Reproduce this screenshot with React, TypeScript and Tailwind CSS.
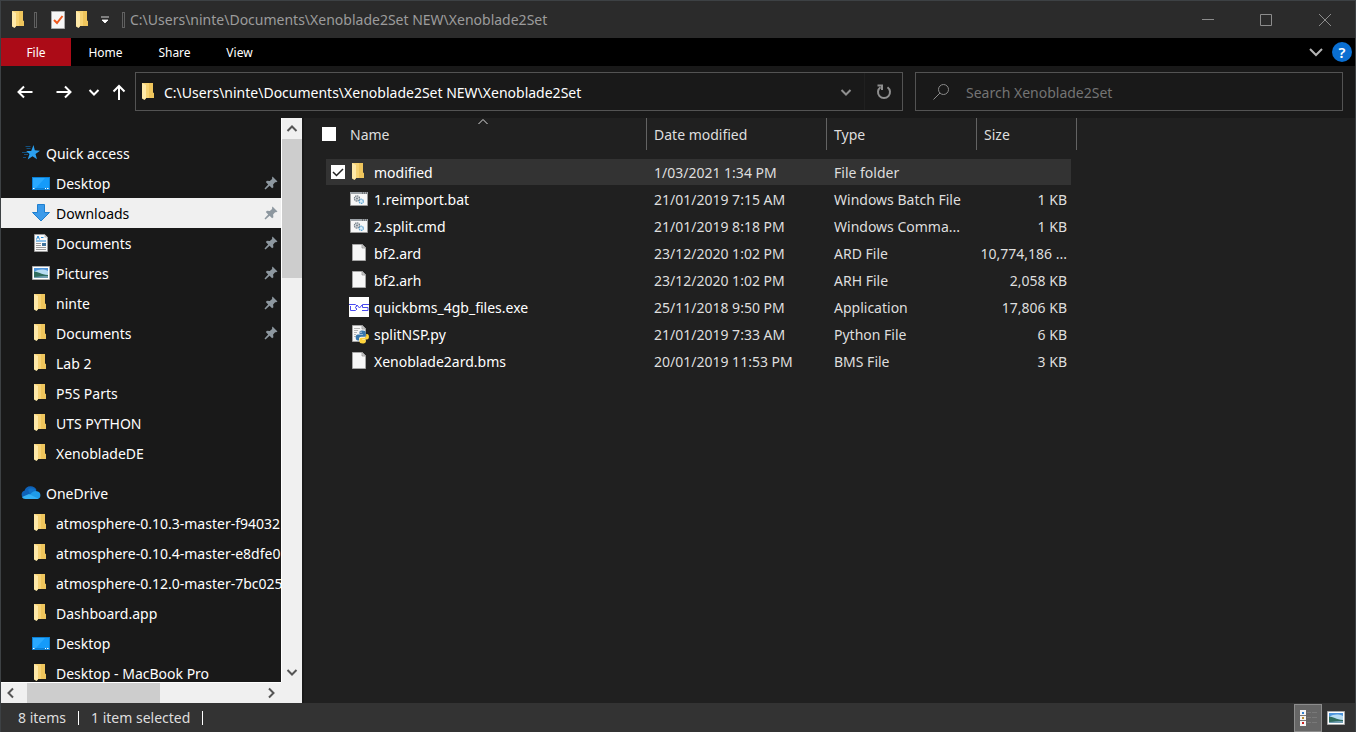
import React, { useState } from 'react'

type IconName = 'folder' | 'desktop' | 'download' | 'document' | 'picture' | 'batch' | 'file' | 'bms' | 'python' | 'star' | 'cloud'

type PlaceProps = {
  name: string
  icon: IconName
  pinned?: boolean
}

type FileProps = {
  name: string
  icon: IconName
  date: string
  type: string
  size: string
}

const quickAccess: PlaceProps[] = [
  { name: 'Desktop', icon: 'desktop', pinned: true },
  { name: 'Downloads', icon: 'download', pinned: true },
  { name: 'Documents', icon: 'document', pinned: true },
  { name: 'Pictures', icon: 'picture', pinned: true },
  { name: 'ninte', icon: 'folder', pinned: true },
  { name: 'Documents', icon: 'folder', pinned: true },
  { name: 'Lab 2', icon: 'folder' },
  { name: 'P5S Parts', icon: 'folder' },
  { name: 'UTS PYTHON', icon: 'folder' },
  { name: 'XenobladeDE', icon: 'folder' },
]

const oneDrive: PlaceProps[] = [
  { name: 'atmosphere-0.10.3-master-f94032', icon: 'folder' },
  { name: 'atmosphere-0.10.4-master-e8dfe0', icon: 'folder' },
  { name: 'atmosphere-0.12.0-master-7bc025', icon: 'folder' },
  { name: 'Dashboard.app', icon: 'folder' },
  { name: 'Desktop', icon: 'desktop' },
  { name: 'Desktop - MacBook Pro', icon: 'folder' },
]

const files: FileProps[] = [
  { name: 'modified', icon: 'folder', date: '1/03/2021 1:34 PM', type: 'File folder', size: '' },
  { name: '1.reimport.bat', icon: 'batch', date: '21/01/2019 7:15 AM', type: 'Windows Batch File', size: '1 KB' },
  { name: '2.split.cmd', icon: 'batch', date: '21/01/2019 8:18 PM', type: 'Windows Comma...', size: '1 KB' },
  { name: 'bf2.ard', icon: 'file', date: '23/12/2020 1:02 PM', type: 'ARD File', size: '10,774,186 ...' },
  { name: 'bf2.arh', icon: 'file', date: '23/12/2020 1:02 PM', type: 'ARH File', size: '2,058 KB' },
  { name: 'quickbms_4gb_files.exe', icon: 'bms', date: '25/11/2018 9:50 PM', type: 'Application', size: '17,806 KB' },
  { name: 'splitNSP.py', icon: 'python', date: '21/01/2019 7:33 AM', type: 'Python File', size: '6 KB' },
  { name: 'Xenoblade2ard.bms', icon: 'file', date: '20/01/2019 11:53 PM', type: 'BMS File', size: '3 KB' },
]

const Icon = ({ name }: { name: IconName }) => (
  <svg width="20" height="20" viewBox="0 0 20 20" className="shrink-0" aria-hidden="true">
    {name === 'folder' && (
      <>
        <path d="M3 1h11v9.500l1 1V16H5z" fill="#f7d374" />
        <path d="M10 1h4v9.500l1 1V16h-5z" fill="#efc55c" />
        <path d="M3 1l4 2v13.500L5.500 18 3 16.500z" fill="#ffe9a8" />
      </>
    )}
    {name === 'desktop' && (
      <>
        <path d="M1 4h18v13H1z" fill="#0b7fd4" />
        <path d="M2 5h16v10H2z" fill="#149bfa" />
        <path d="M2 5h12L5 15H2z" fill="#2aa9ff" />
        <path d="M2 15.500h1.500M14 15.500h1M16 15.500h1.500" stroke="#fff" />
      </>
    )}
    {name === 'download' && <path d="M6.500 1.500h7v8h5L10 18 1.500 9.500h5z" fill="#3c9bea" stroke="#1f7fcf" />}
    {name === 'document' && (
      <>
        <path d="M3.500 1.500h10l3 3v14h-13z" fill="#fafafa" stroke="#9b9b9b" />
        <path d="M13.500 1v3.500H17z" fill="#bcbcbc" />
        <path d="M5.500 6.500L7 3l1.500 3.500M10 4.500h2.500M5 8h10" stroke="#1e88d8" fill="none" />
        <path d="M5 10.500h5M5 12.500h5M5 14.500h10M5 16.500h10" stroke="#9a9a9a" />
        <path d="M11 10h4v3h-4z" fill="#40739c" />
      </>
    )}
    {name === 'picture' && (
      <>
        <path d="M1.500 3.500h17v13h-17z" fill="#fff" stroke="#a9a9a9" />
        <path d="M3 5h14v5H3z" fill="#4d94dc" />
        <path d="M3 9c5-3 9-3 14-1v4H3z" fill="#b7dcf3" />
        <path d="M3 12h14v3H3z" fill="#6f9cb0" />
        <path d="M3 8.500c4 0 7 3 14 3.500v1c-6 0-9 .5-14 1z" fill="#2f6c5d" />
      </>
    )}
    {name === 'batch' && (
      <>
        <path d="M1.500 3.500h17v13h-17z" fill="#f7f7f7" stroke="#9a9a9a" />
        <path d="M1 3h18v2H1z" fill="#9da3a8" />
        <path d="M13 4h1M15 4h1M17 4h1" stroke="#444" />
        <circle cx="8" cy="9.500" r="2.600" fill="#d5dade" stroke="#6f7a83" strokeWidth="1.200" strokeDasharray="1.400 .6" />
        <circle cx="8" cy="9.500" r=".9" fill="#6f7a83" />
        <circle cx="12.300" cy="12.300" r="2.100" fill="#d9edf9" stroke="#5ea3d0" strokeWidth="1.200" strokeDasharray="1.400 .6" />
      </>
    )}
    {(name === 'file' || name === 'python') && (
      <>
        <path d="M3.500 1.500h10l3 3v13h-13z" fill="#f7f7f7" stroke="#a5a5a5" />
        <path d="M13 1.500v3.500h3.500z" fill="#d6d6d6" stroke="#8e8e8e" strokeWidth=".7" />
      </>
    )}
    {name === 'python' && (
      <>
        <path d="M5 4.500h6M5 6.500h4M5 8.500h3M5 10.500h2M5 12.500h2" stroke="#b5b5b5" />
        <path d="M13.500 6.500c-3 0-3 1-3 2.500v1h3.500v.6H9c-2 0-2.300 1.600-2.300 3.200s.8 2.700 2.300 2.700h1v-1.700c0-1.300.9-2 2-2h3c1.100 0 1.800-.7 1.800-1.800V9c0-1.700-.8-2.500-3.300-2.500z" fill="#3776ab" />
        <path d="M13.700 19.500c3 0 3-1 3-2.500v-1h-3.500v-.6h4.500c2 0 2.200-1.400 2.200-2.700 0-1.500-.7-2.600-2-2.600h-.7v1.700c0 1.200-.9 2-2 2h-3c-1.100 0-1.800.7-1.800 1.800V17c0 1.700.8 2.500 3.300 2.500z" fill="#ffd43b" />
        <circle cx="12" cy="8.200" r=".6" fill="#fff" />
      </>
    )}
    {name === 'bms' && (
      <>
        <path d="M0 0h20v20H0z" fill="#fff" />
        <path d="M0 7.500h6.500L8 9l-2 1.500 2 1.500-1.500 1.500H1.500V9" fill="none" stroke="#4a4af0" />
        <path d="M8 8l2.500 3L13 8" fill="none" stroke="#4a4af0" />
        <path d="M20 7.500h-6.500v3H19v3h-6" fill="none" stroke="#4a4af0" />
      </>
    )}
    {name === 'star' && (
      <>
        <path d="M4.500 3.500h5M5.500 5.500h4M1 9.500h6M3 11.500h4M2 14.500h3" stroke="#15507d" />
        <path d="M12.500 2l1.300 5.300 5.200.4-4.500 3.200 1.500 5.300-4.500-3-4.800 3.300 1.800-5.600-3.300-3h5z" fill="#2ba0f0" />
      </>
    )}
    {name === 'cloud' && (
      <>
        <path d="M4 15.500a4 4 0 0 1-.5-7.800A6.500 6.500 0 0 1 15.500 7z" fill="#0f62b8" />
        <path d="M7 6.500A6 6 0 0 1 15.500 8L9 12z" fill="#1173c9" />
        <path d="M4.500 15.800L11 9.500a5 5 0 0 1 5-1.300A4 4 0 0 1 16.500 16H4.500z" fill="#1f9be8" />
        <path d="M1 14l7-3 9.500 4.700-1 .3H4.500C2.700 16 1.500 15.300 1 14z" fill="#35b1f5" />
      </>
    )}
  </svg>
)

const Chevron = ({ className, d }: { className?: string; d: string }) => (
  <svg width="12" height="12" viewBox="0 0 12 12" fill="none" stroke="currentColor" strokeWidth="2" className={className} aria-hidden="true">
    <path d={d} />
  </svg>
)
const up = 'M1.500 8L6 3.500 10.500 8'
const down = 'M1.500 4L6 8.500 10.500 4'
const left = 'M8 1.500L3.500 6 8 10.500'
const right = 'M4 1.500L8.500 6 4 10.500'

const Pin = () => (
  <svg width="14" height="14" viewBox="0 0 14 14" className="shrink-0" fill="#8d979f" aria-hidden="true">
    <path d="M8.500.5l5 5-1.400.8-1-.1-2 2.200.3 2.800-1.300 1.100-2.500-2.500L1.500 13.500l-1-.9L4.200 8.400 1.800 6 3 4.800l2.800.2 2.300-2V1.500z" />
  </svg>
)

const Place = ({ name, icon, pinned, active, onClick }: PlaceProps & { active: boolean; onClick: () => void }) => (
  <button
    onClick={onClick}
    className={`flex h-[30px] w-full shrink-0 items-center gap-1 pl-[30px] pr-[3px] text-left whitespace-nowrap ${active ? 'bg-[#f0f0f0] text-black' : 'text-white'}`}
  >
    <Icon name={icon} />
    <span className="flex-1 pt-0.5 pl-px">{name}</span>
    {pinned && <Pin />}
  </button>
)

const TitleBar = () => (
  <header className="flex h-[37px] shrink-0 items-center bg-[#2b2b2b]">
    <div className="flex flex-1 items-center pl-2">
      <Icon name="folder" />
      <span className="mx-[5px] h-4 w-[3px] border border-[#606060]" />
      <button aria-label="Properties" className="ml-2">
        <svg width="18" height="20" viewBox="0 0 18 20">
          <path d="M1.500 1.500h13v17h-13z" fill="#f7f7f7" stroke="#aaa" />
          <path d="M4 10l3 3 5.500-7" fill="none" stroke="#f0581c" strokeWidth="2" />
        </svg>
      </button>
      <button aria-label="New folder" className="ml-[5px]">
        <Icon name="folder" />
      </button>
      <button aria-label="Customise toolbar" className="mx-2">
        <svg width="8" height="8" viewBox="0 0 8 8">
          <path d="M0 1h8M1 4h6L4 7z" stroke="#fff" fill="#fff" strokeWidth=".8" />
        </svg>
      </button>
      <span className="mx-[5px] h-4 w-[3px] border border-[#606060]" />
      <h1 className="text-[#9c9c9c]">C:\Users\ninte\Documents\Xenoblade2Set NEW\Xenoblade2Set</h1>
    </div>
    <div className="flex text-[#8c8c8c]">
      <button aria-label="Minimise" className="flex h-9 w-[58px] items-center justify-center">
        <svg width="12" height="12" viewBox="0 0 12 12" stroke="currentColor"><path d="M0 5.500h12" /></svg>
      </button>
      <button aria-label="Maximise" className="flex h-9 w-[58px] items-center justify-center">
        <svg width="12" height="12" viewBox="0 0 12 12" stroke="currentColor" fill="none"><path d="M.5.5h11v11H.5z" /></svg>
      </button>
      <button aria-label="Close" className="flex h-9 w-[60px] items-center justify-center">
        <svg width="12" height="12" viewBox="0 0 12 12" stroke="currentColor"><path d="M0 0l12 12M12 0L0 12" /></svg>
      </button>
    </div>
  </header>
)

const Ribbon = () => (
  <nav className="flex h-7 shrink-0 items-center bg-black text-[12px] text-white">
    <button className="h-7 w-[70px] bg-[#ac0b17] pt-0.5">File</button>
    <button className="h-7 w-[69px] pt-0.5">Home</button>
    <button className="h-7 w-[69px] pt-0.5">Share</button>
    <button className="h-7 w-[61px] pt-0.5">View</button>
    <button aria-label="Expand ribbon" className="ml-auto text-[#b4b4b4]">
      <svg width="14" height="10" viewBox="0 0 14 10" fill="none" stroke="currentColor" strokeWidth="2"><path d="M1 2l6 6 6-6" /></svg>
    </button>
    <button aria-label="Help" className="mr-[3px] ml-[9px] h-5 w-5 rounded-full bg-[#0a6fd2] text-[15px] leading-5 font-semibold">?</button>
  </nav>
)

const Toolbar = () => (
  <div className="flex h-[52px] shrink-0 items-center bg-[#191919] pr-3 pb-px pl-4 text-white">
    <button aria-label="Back">
      <svg width="16" height="16" viewBox="0 0 16 16" fill="none" stroke="currentColor" strokeWidth="2"><path d="M15.500 8H1.500M7 2.500L1.500 8 7 13.500" /></svg>
    </button>
    <button aria-label="Forward" className="ml-[23px]">
      <svg width="16" height="16" viewBox="0 0 16 16" fill="none" stroke="currentColor" strokeWidth="2"><path d="M.5 8h14M9 2.500l5.500 5.500L9 13.500" /></svg>
    </button>
    <button aria-label="Recent locations" className="ml-4">
      <Chevron d={down} />
    </button>
    <button aria-label="Up" className="mr-[9px] ml-3">
      <svg width="14" height="16" viewBox="0 0 14 16" fill="none" stroke="currentColor" strokeWidth="2"><path d="M7 16V2M1.500 7.500L7 2l5.500 5.500" /></svg>
    </button>
    <div className="flex h-[39px] flex-1 items-center border border-[#535353] pl-[3px]">
      <Icon name="folder" />
      <input
        aria-label="Address"
        defaultValue="C:\Users\ninte\Documents\Xenoblade2Set NEW\Xenoblade2Set"
        className="ml-[5px] min-w-0 flex-1 bg-transparent pt-0.5 outline-none"
      />
      <button aria-label="Previous locations" className="px-3 text-[#8f8f8f]">
        <Chevron d={down} />
      </button>
      <button aria-label="Refresh" className="flex h-full w-[38px] items-center justify-center border-l border-[#202020] text-[#8f8f8f]">
        <svg width="16" height="16" viewBox="0 0 16 16" fill="none" stroke="currentColor" strokeWidth="2">
          <path d="M4.500 3.200A6 6 0 1 0 11.500 3.200" />
          <path d="M1.500 1.500h4.500V6" />
        </svg>
      </button>
    </div>
    <div className="ml-3 flex h-[39px] w-[428px] items-center border border-[#535353] pl-4">
      <svg width="18" height="18" viewBox="0 0 18 18" fill="none" stroke="#8a8a8a" aria-hidden="true">
        <circle cx="11.500" cy="6.500" r="5" />
        <path d="M8 10l-6.500 6.500" />
      </svg>
      <input aria-label="Search" placeholder="Search Xenoblade2Set" className="ml-4 min-w-0 flex-1 bg-transparent pt-0.5 outline-none placeholder:text-[#747474]" />
    </div>
  </div>
)

const Sidebar = () => {
  const [active, setActive] = useState('Downloads')
  return (
    <aside className="grid w-[301px] shrink-0 grid-cols-[minmax(0,1fr)_21px] grid-rows-[minmax(0,1fr)_21px] bg-[#f0f0f0]">
      <div className="flex flex-col overflow-hidden bg-[#191919] pt-5 text-white">
        <div className="flex h-[30px] shrink-0 items-center gap-1 pl-5">
          <Icon name="star" />
          <span className="pt-0.5 pl-px">Quick access</span>
        </div>
        {quickAccess.map((x, i) => (
          <Place key={i} {...x} active={x.name === active} onClick={() => setActive(x.name)} />
        ))}
        <div className="mt-[10px] flex h-[30px] shrink-0 items-center gap-1 pl-5">
          <Icon name="cloud" />
          <span className="pt-0.5 pl-px">OneDrive</span>
        </div>
        {oneDrive.map((x, i) => (
          <Place key={i} {...x} active={false} onClick={() => setActive(x.name)} />
        ))}
      </div>
      <div className="flex flex-col items-center border-l border-white text-[#555]">
        <button aria-label="Scroll up" className="flex h-[21px] w-full items-center justify-center">
          <Chevron d={up} />
        </button>
        <div className="h-[139px] w-full bg-[#cdcdcd]" />
        <button aria-label="Scroll down" className="mt-auto flex h-[21px] w-full items-center justify-center">
          <Chevron d={down} />
        </button>
      </div>
      <div className="flex items-center border-t border-white text-[#555]">
        <button aria-label="Scroll left" className="flex h-full w-[26px] items-center pl-1">
          <Chevron d={left} />
        </button>
        <div className="h-full w-[133px] bg-[#cdcdcd]" />
        <button aria-label="Scroll right" className="ml-auto flex h-full w-[21px] items-center justify-center">
          <Chevron d={right} />
        </button>
      </div>
    </aside>
  )
}

const FileList = () => {
  const [selected, setSelected] = useState('modified')
  return (
    <main className="flex-1 overflow-hidden border-l-2 border-[#191919] bg-[#202020] text-[#dedede]">
      <table className="w-[773px] table-fixed border-collapse text-left">
        <thead>
          <tr>
            <th className="relative w-[343px] p-0 pb-[9px] font-normal">
              <Chevron d={up} className="absolute top-[-2px] left-[173px] stroke-1" />
              <div className="flex h-8 items-center gap-[14px] border-r border-[#636363] pl-[18px]">
                <input type="checkbox" aria-label="Select all" className="h-[14px] w-[14px] appearance-none bg-white" />
                <span className="pt-0.5">Name</span>
              </div>
            </th>
            <th className="w-[180px] p-0 pb-[9px] font-normal">
              <div className="flex h-8 items-center border-r border-[#636363] pt-0.5 pl-[7px]">Date modified</div>
            </th>
            <th className="w-[150px] p-0 pb-[9px] font-normal">
              <div className="flex h-8 items-center border-r border-[#636363] pt-0.5 pl-[7px]">Type</div>
            </th>
            <th className="w-[100px] p-0 pb-[9px] font-normal">
              <div className="flex h-8 items-center border-r border-[#636363] pt-0.5 pl-[7px]">Size</div>
            </th>
          </tr>
        </thead>
        <tbody>
          {files.map((xx) => {
            const on = xx.name === selected
            const bg = on ? 'bg-[#333333]' : ''
            return (
              <tr key={xx.name} onClick={() => setSelected(xx.name)}>
                <td className="p-0 pb-px pl-[22px]">
                  <div className={`flex h-[26px] items-center gap-1 pl-[5px] text-white ${bg}`}>
                    <span className="relative h-[14px] w-[14px]">
                      {on && (
                        <>
                          <input type="checkbox" aria-label={xx.name} checked readOnly className="block h-[14px] w-[14px] appearance-none bg-white" />
                          <svg width="14" height="14" viewBox="0 0 14 14" className="pointer-events-none absolute inset-0" fill="none" stroke="#222" strokeWidth="1.500">
                            <path d="M2 7l3.500 3.500L12 4" />
                          </svg>
                        </>
                      )}
                    </span>
                    <Icon name={xx.icon} />
                    <span className="pt-0.5 pl-px">{xx.name}</span>
                  </div>
                </td>
                <td className="p-0 pb-px">
                  <div className={`flex h-[26px] items-center pt-0.5 pl-[7px] ${bg}`}>{xx.date}</div>
                </td>
                <td className="p-0 pb-px">
                  <div className={`flex h-[26px] items-center pt-0.5 pl-[7px] ${bg}`}>{xx.type}</div>
                </td>
                <td className="p-0 pr-[6px] pb-px">
                  <div className={`flex h-[26px] items-center justify-end pt-0.5 pr-1 whitespace-nowrap ${bg}`}>{xx.size}</div>
                </td>
              </tr>
            )
          })}
        </tbody>
      </table>
    </main>
  )
}

const StatusBar = () => (
  <footer className="flex h-[29px] shrink-0 items-center bg-[#333333] pl-[17px] text-[#dedede]">
    <span className="border-r border-white pr-3 leading-[14px]">8 items</span>
    <span className="border-r border-white px-3 leading-[14px]">1 item selected</span>
    <button aria-label="Details view" className="ml-auto flex h-[28px] w-[28px] items-center justify-center border border-[#8c8c8c] bg-[#666]">
      <svg width="18" height="18" viewBox="0 0 18 18">
        <path d="M1 1h6v16H1z" fill="#f4f4f4" />
        <path d="M3 3h2v2H3z" fill="#2f7fd0" />
        <path d="M3 8h2v2H3z" fill="#b98a2e" />
        <path d="M3 13h2v2H3z" fill="#c22" />
        <path d="M1 6.500h6M1 11.500h6" stroke="#777" />
        <path d="M8 3.500h4M13 3.500h5M8 8.500h4M13 8.500h5M8 13.500h4M13 13.500h5" stroke="#787878" />
      </svg>
    </button>
    <button aria-label="Large icons view" className="mr-[9px] ml-1">
      <Icon name="picture" />
    </button>
  </footer>
)

const App = () => {
  return (
    <div className="flex h-screen flex-col border-x border-t border-[#3d4144] bg-[#202020] font-['Noto_Sans','Open_Sans',sans-serif] text-[14px] leading-5">
      <TitleBar />
      <Ribbon />
      <Toolbar />
      <div className="flex min-h-0 flex-1">
        <Sidebar />
        <FileList />
      </div>
      <StatusBar />
    </div>
  )
}

export default App
